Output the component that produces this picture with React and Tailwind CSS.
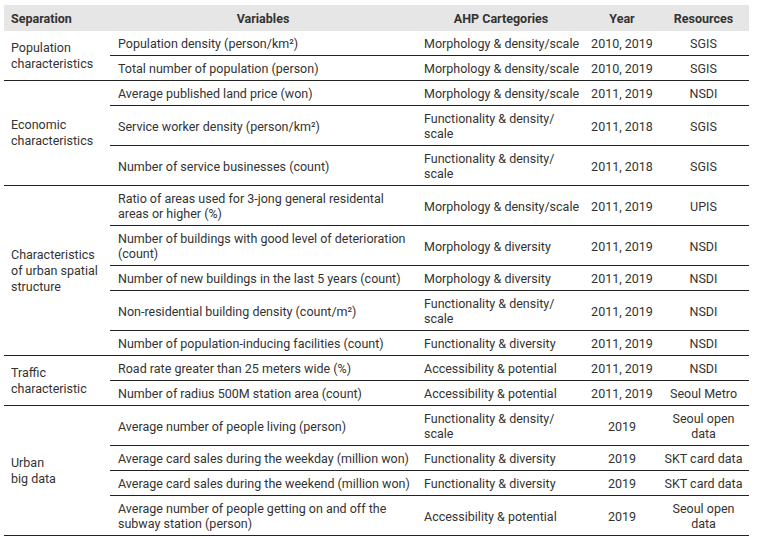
import React from "react";

const groups = [
  {
    name: ["Population", "characteristics"],
    rows: [
      [["Population density (person/km²)"], ["Morphology & density/scale"], "2010, 2019", ["SGIS"]],
      [["Total number of population (person)"], ["Morphology & density/scale"], "2010, 2019", ["SGIS"]],
    ],
  },
  {
    name: ["Economic", "characteristics"],
    rows: [
      [["Average published land price (won)"], ["Morphology & density/scale"], "2011, 2019", ["NSDI"]],
      [["Service worker density (person/km²)"], ["Functionality & density/", "scale"], "2011, 2018", ["SGIS"]],
      [["Number of service businesses (count)"], ["Functionality & density/", "scale"], "2011, 2018", ["SGIS"]],
    ],
  },
  {
    name: ["Characteristics", "of urban spatial", "structure"],
    rows: [
      [["Ratio of areas used for 3-jong general residental", "areas or higher (%)"], ["Morphology & density/scale"], "2011, 2019", ["UPIS"]],
      [["Number of buildings with good level of deterioration", "(count)"], ["Morphology & diversity"], "2011, 2019", ["NSDI"]],
      [["Number of new buildings in the last 5 years (count)"], ["Morphology & diversity"], "2011, 2019", ["NSDI"]],
      [["Non-residential building density (count/m²)"], ["Functionality & density/", "scale"], "2011, 2019", ["NSDI"]],
      [["Number of population-inducing facilities (count)"], ["Functionality & diversity"], "2011, 2019", ["NSDI"]],
    ],
  },
  {
    name: ["Traffic", "characteristic"],
    rows: [
      [["Road rate greater than 25 meters wide (%)"], ["Accessibility & potential"], "2011, 2019", ["NSDI"]],
      [["Number of radius 500M station area (count)"], ["Accessibility & potential"], "2011, 2019", ["Seoul Metro"]],
    ],
  },
  {
    name: ["Urban", "big data"],
    rows: [
      [["Average number of people living (person)"], ["Functionality & density/", "scale"], "2019", ["Seoul open", "data"]],
      [["Average card sales during the weekday (million won)"], ["Functionality & diversity"], "2019", ["SKT card data"]],
      [["Average card sales during the weekend (million won)"], ["Functionality & diversity"], "2019", ["SKT card data"]],
      [["Average number of people getting on and off the", "subway station (person)"], ["Accessibility & potential"], "2019", ["Seoul open", "data"]],
    ],
  },
];

function Lines({ items }) {
  return items.map((t, i) => (
    <React.Fragment key={i}>
      {i > 0 && <br />}
      {t}
    </React.Fragment>
  ));
}

export default function App() {
  return (
    <div className="w-[757px] h-[539px] bg-white pt-[5px] pl-[4px]" style={{ fontFamily: "Roboto, 'Liberation Sans', sans-serif" }}>
      <table className="w-[745px] table-fixed border-collapse text-[12.5px] leading-[15px] text-[#333]">
        <colgroup>
          <col className="w-[106px]" />
          <col className="w-[306px]" />
          <col className="w-[170px]" />
          <col className="w-[72px]" />
          <col className="w-[91px]" />
        </colgroup>
        <thead>
          <tr className="bg-[#e6e6e6] font-bold text-[#333]">
            <th className="pt-[6px] pb-[5px] pl-[7px] text-left font-bold">Separation</th>
            <th className="pt-[6px] pb-[5px] text-center font-bold">Variables</th>
            <th className="pt-[6px] pb-[5px] text-center font-bold">AHP Cartegories</th>
            <th className="pt-[6px] pb-[5px] text-center font-bold">Year</th>
            <th className="pt-[6px] pb-[5px] text-center font-bold">Resources</th>
          </tr>
        </thead>
        <tbody>
          {groups.map((g, gi) =>
            g.rows.map((r, ri) => (
              <tr key={gi + "-" + ri} className="border-b border-[#222]">
                {ri === 0 && (
                  <td rowSpan={g.rows.length} className="pl-[7px] leading-[16px] align-middle border-b border-[#222]">
                    <Lines items={g.name} />
                  </td>
                )}
                <td className="pt-[5px] pb-[4px] pl-[8px] whitespace-nowrap align-middle">
                  <Lines items={r[0]} />
                </td>
                <td className="pt-[5px] pb-[4px] pl-[8px] whitespace-nowrap align-middle">
                  <Lines items={r[1]} />
                </td>
                <td className="pt-[5px] pb-[4px] text-center whitespace-nowrap align-middle">{r[2]}</td>
                <td className="pt-[5px] pb-[4px] text-center whitespace-nowrap align-middle">
                  <Lines items={r[3]} />
                </td>
              </tr>
            ))
          )}
        </tbody>
      </table>
    </div>
  );
}
